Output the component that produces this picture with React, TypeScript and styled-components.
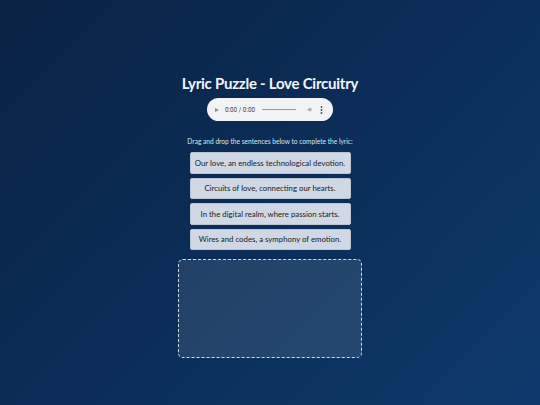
import React from "react";
import styled, { createGlobalStyle } from "styled-components";

const lines = [
  "Our love, an endless technological devotion.",
  "Circuits of love, connecting our hearts.",
  "In the digital realm, where passion starts.",
  "Wires and codes, a symphony of emotion.",
];

const GlobalStyle = createGlobalStyle`
  html, body {
    margin: 0;
    padding: 0;
  }
  body {
    font-family: "Lato", "DejaVu Sans", sans-serif;
    background: linear-gradient(135deg, #0a2244 0%, #0b2d58 50%, #0d3a6b 100%);
    min-height: 100vh;
  }
`;

const Page = styled.main`
  min-height: 405px;
  display: flex;
  flex-direction: column;
  align-items: center;
  padding-top: 73px;
  box-sizing: border-box;
`;

const Title = styled.h1`
  margin: 0;
  font-size: 15px;
  font-weight: 700;
  color: #f2f5f9;
  letter-spacing: -0.25px;
  line-height: 20px;
`;

const Player = styled.div`
  margin-top: 5px;
  width: 126px;
  height: 23px;
  border-radius: 12px;
  background: #f1f3f4;
  display: flex;
  align-items: center;
  padding: 0 9px 0 8px;
  box-sizing: border-box;
`;

const PlayIcon = styled.span`
  width: 0;
  height: 0;
  border-top: 2.5px solid transparent;
  border-bottom: 2.5px solid transparent;
  border-left: 4px solid #8a8a8a;
`;

const Time = styled.span`
  margin-left: 6px;
  font-family: "Roboto", "Liberation Sans", sans-serif;
  font-size: 6.3px;
  color: #3c3c3c;
  white-space: nowrap;
`;

const Track = styled.span`
  margin-left: 7px;
  width: 34px;
  height: 1px;
  background: #9a9a9a;
`;

const Volume = styled.svg`
  margin-left: 11px;
  width: 7px;
  height: 7px;
`;

const Dots = styled.svg`
  margin-left: 6px;
  width: 3px;
  height: 8px;
`;

const Hint = styled.p`
  margin: 15px 0 0;
  font-size: 6.6px;
  color: #dbe4ee;
  line-height: 10px;
`;

const List = styled.div`
  margin-top: 6px;
  display: flex;
  flex-direction: column;
  gap: 4px;
`;

const Sentence = styled.div`
  width: 161px;
  height: 21.5px;
  box-sizing: border-box;
  border: 1px solid #b9c5d3;
  border-radius: 2px;
  background: #cfd8e3;
  color: #161c26;
  font-size: 7.8px;
  display: flex;
  align-items: center;
  justify-content: center;
  cursor: grab;
`;

const DropZone = styled.div`
  margin-top: 8.5px;
  width: 184px;
  height: 99px;
  box-sizing: border-box;
  border: 1px dashed #cfdbe9;
  border-radius: 5px;
  background: rgba(255, 255, 255, 0.1);
`;

export default function App() {
  return (
    <>
      <GlobalStyle />
      <Page>
        <Title>Lyric Puzzle - Love Circuitry</Title>
        <Player>
          <PlayIcon />
          <Time>0:00 / 0:00</Time>
          <Track />
          <Volume viewBox="0 0 24 24">
            <path d="M3 9v6h4l5 5V4L7 9H3z" fill="#9a9a9a" />
            <path d="M16.5 12A4.5 4.5 0 0 0 14 8v8a4.5 4.5 0 0 0 2.5-4z" fill="#9a9a9a" />
          </Volume>
          <Dots viewBox="0 0 3 8">
            <circle cx="1.5" cy="1" r="0.9" fill="#4a4a4a" />
            <circle cx="1.5" cy="4" r="0.9" fill="#4a4a4a" />
            <circle cx="1.5" cy="7" r="0.9" fill="#4a4a4a" />
          </Dots>
        </Player>
        <Hint>Drag and drop the sentences below to complete the lyric:</Hint>
        <List>
          {lines.map((l) => (
            <Sentence key={l} draggable>
              {l}
            </Sentence>
          ))}
        </List>
        <DropZone />
      </Page>
    </>
  );
}
